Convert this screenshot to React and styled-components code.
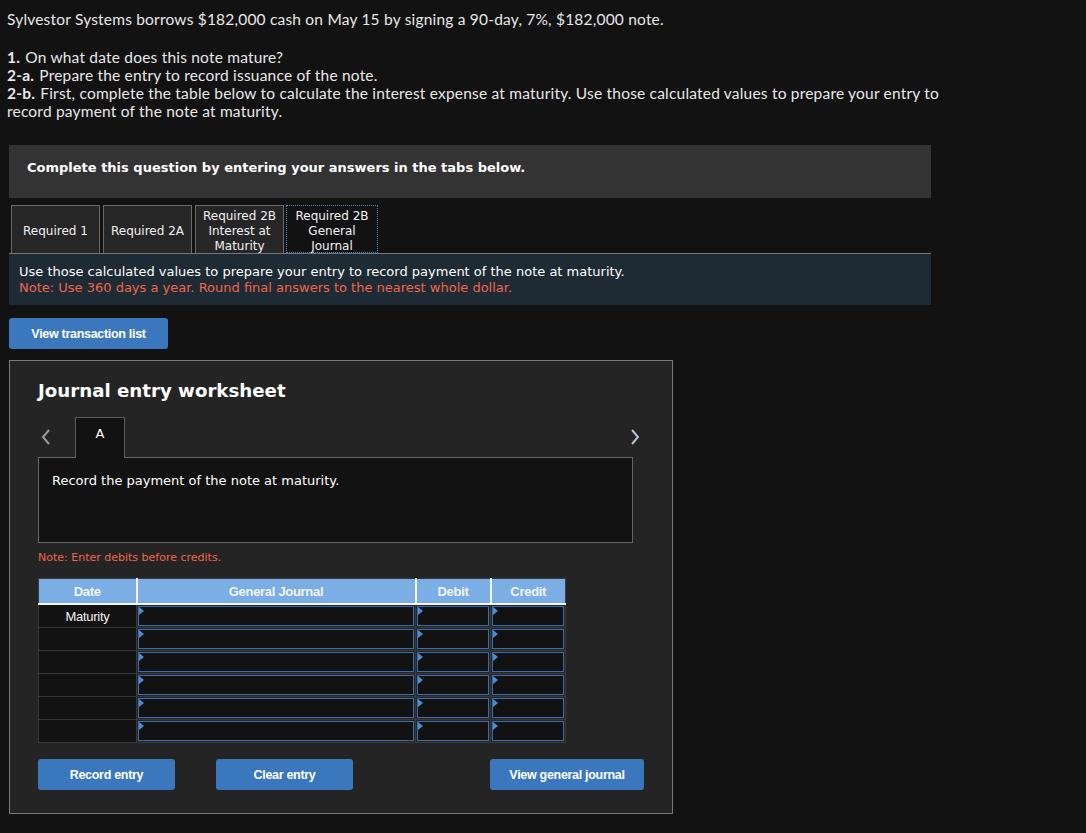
import React from "react";
import styled, { createGlobalStyle } from "styled-components";

const GlobalStyle = createGlobalStyle`
  body {
    margin: 0;
    background: #121212;
    color: #e8e8e8;
    font-family: "Lato", "Open Sans", sans-serif;
  }
`;

const Page = styled.div`
  padding: 10px 0 20px;
`;

const Intro = styled.div`
  width: 935px;
  padding: 0 7px;
  font-size: 15.5px;
  letter-spacing: 0.2px;
  line-height: 18px;
  p {
    margin: 0 0 20px;
  }
  b {
    font-weight: 700;
    margin-right: 1px;
  }
`;

const Block = styled.div`
  margin-left: 9px;
  width: 922px;
`;

const Prompt = styled.div`
  margin-top: 25px;
  height: 53px;
  box-sizing: border-box;
  padding: 15px 18px;
  background: #333333;
  color: #ffffff;
  font: bold 13px "DejaVu Sans", Verdana, sans-serif;
`;

const TabRow = styled.div`
  display: flex;
  gap: 3px;
  margin-top: 7px;
  padding-left: 2px;
`;

const Tab = styled.div`
  height: 48px;
  box-sizing: border-box;
  display: flex;
  align-items: center;
  justify-content: center;
  padding-top: 4px;
  text-align: center;
  font: 12px/15px "DejaVu Sans", Verdana, sans-serif;
  color: #f2f2f2;
  background: ${(p) => (p.$active ? "#121212" : "#262626")};
  border: ${(p) => (p.$active ? "1px dotted #4a86cc" : "1px solid #6a6a6a")};
  border-bottom: ${(p) => (p.$active ? "1px dotted #4a86cc" : "none")};
  width: ${(p) => (p.$active ? "92px" : "89px")};
  margin-left: ${(p) => (p.$active ? "-1px" : "0")};
`;

const Info = styled.div`
  height: 52px;
  box-sizing: border-box;
  border-top: 1px solid #777;
  background: #1e2a34;
  padding: 10px 10px;
  font: 13px/16px "DejaVu Sans", Verdana, sans-serif;
  color: #ffffff;
`;

const Warn = styled.div`
  color: #f0664a;
`;

const Button = styled.button`
  height: 31px;
  width: ${(p) => p.$w || "137px"};
  margin-left: ${(p) => p.$ml || "0"};
  margin-right: ${(p) => p.$mr || "0"};
  border: none;
  border-radius: 3px;
  background: #3a77bd;
  color: #ffffff;
  font: bold 12.5px "Liberation Sans", Arial, sans-serif;
  letter-spacing: -0.3px;
  cursor: pointer;
`;

const TopButton = styled(Button)`
  margin: 13px 0 0 9px;
  display: block;
`;

const Panel = styled.div`
  margin: 11px 0 0 9px;
  width: 664px;
  height: 454px;
  box-sizing: border-box;
  background: #242424;
  border: 1px solid #7a7a7a;
  padding: 18px 39px 0 28px;
`;

const Title = styled.h2`
  margin: 0;
  font: bold 18.2px/24px "DejaVu Sans", Verdana, sans-serif;
  color: #ffffff;
`;

const NavRow = styled.div`
  display: flex;
  align-items: flex-end;
  margin-top: 14px;
  height: 40px;
`;

const Arrow = styled.span`
  display: flex;
  align-items: center;
  height: 32px;
  width: ${(p) => (p.$right ? "auto" : "35px")};
  margin-left: ${(p) => (p.$right ? "auto" : "0")};
  padding-left: ${(p) => (p.$right ? "0" : "2px")};
  margin-right: ${(p) => (p.$right ? "-8px" : "0")};
  align-self: flex-start;
  margin-top: 4px;
`;

const EntryTab = styled.div`
  width: 50px;
  height: 41px;
  box-sizing: border-box;
  background: #121212;
  border: 1px solid #5a5a5a;
  border-bottom: none;
  display: flex;
  justify-content: center;
  padding-top: 8px;
  font: 13px "DejaVu Sans", Verdana, sans-serif;
  color: #fff;
  position: relative;
  top: 1px;
`;

const Description = styled.div`
  width: 595px;
  height: 86px;
  box-sizing: border-box;
  background: #121212;
  border: 1px solid #666;
  padding: 15px 13px;
  font: 13px "DejaVu Sans", Verdana, sans-serif;
  color: #fff;
`;

const Note = styled.div`
  margin-top: 8px;
  font: 11px "DejaVu Sans", Verdana, sans-serif;
  color: #f0664a;
`;

const Table = styled.table`
  margin-top: 14px;
  border-collapse: collapse;
  width: 527px;
  table-layout: fixed;
`;

const Th = styled.th`
  height: 24px;
  padding: 0;
  background: #7aaee5;
  color: #f4f4f4;
  font: bold 13px "Liberation Sans", Arial, sans-serif;
  letter-spacing: -0.3px;
  border-top: 1px solid #3a3a3a;
  border-left: 2px solid #f4f4f4;
  border-bottom: 2px solid #f4f4f4;
  &:first-child {
    border-left: 1px solid #3a3a3a;
  }
  &:last-child {
    border-right: 1px solid #3a3a3a;
  }
`;

const DateCell = styled.td`
  height: 22px;
  padding: 0;
  background: #121212;
  border: 1px solid #3a3a3a;
  text-align: center;
  color: #f4f4f4;
  font: 13px/15px "Liberation Sans", Arial, sans-serif;
  letter-spacing: -0.3px;
`;

const InputCell = styled.td`
  padding: 1px;
  height: 20px;
  border-right: 1px solid #3a3a3a;
  border-bottom: 1px solid #3a3a3a;
  background: #242424;
`;

const Field = styled.div`
  position: relative;
  height: 20px;
  box-sizing: border-box;
  background: #121212;
  border: 1px solid #3a6eae;
  &::before {
    content: "";
    position: absolute;
    left: 0;
    top: 0;
    border-top: 4px solid transparent;
    border-bottom: 4px solid transparent;
    border-left: 5px solid #4f8ad4;
  }
`;

const Actions = styled.div`
  display: flex;
  margin-top: 16px;
`;

const Chevron = ({ dir, color }) => (
  <svg width="12" height="18" viewBox="0 0 12 18">
    <path
      d={dir === "left" ? "M9 2 L3 9 L9 16" : "M3 2 L9 9 L3 16"}
      fill="none"
      stroke={color}
      strokeWidth="2"
    />
  </svg>
);

const rows = ["Maturity", "", "", "", "", ""];

export default function App() {
  return (
    <Page>
      <GlobalStyle />
      <Intro>
        <p>Sylvestor Systems borrows $182,000 cash on May 15 by signing a 90-day, 7%, $182,000 note.</p>
        <p>
          <b>1.</b> On what date does this note mature?
          <br />
          <b>2-a.</b> Prepare the entry to record issuance of the note.
          <br />
          <b>2-b.</b> First, complete the table below to calculate the interest expense at maturity. Use those
          calculated values to prepare your entry to record payment of the note at maturity.
        </p>
      </Intro>
      <Block>
        <Prompt>Complete this question by entering your answers in the tabs below.</Prompt>
        <TabRow>
          <Tab>Required 1</Tab>
          <Tab>Required 2A</Tab>
          <Tab>
            Required 2B
            <br />
            Interest at
            <br />
            Maturity
          </Tab>
          <Tab $active>
            Required 2B
            <br />
            General
            <br />
            Journal
          </Tab>
        </TabRow>
        <Info>
          <div>Use those calculated values to prepare your entry to record payment of the note at maturity.</div>
          <Warn>Note: Use 360 days a year. Round final answers to the nearest whole dollar.</Warn>
        </Info>
      </Block>
      <TopButton $w="159px">View transaction list</TopButton>
      <Panel>
        <Title>Journal entry worksheet</Title>
        <NavRow>
          <Arrow>
            <Chevron dir="left" color="#9a9a9a" />
          </Arrow>
          <EntryTab>A</EntryTab>
          <Arrow $right>
            <Chevron dir="right" color="#b4c4d8" />
          </Arrow>
        </NavRow>
        <Description>Record the payment of the note at maturity.</Description>
        <Note>Note: Enter debits before credits.</Note>
        <Table>
          <colgroup>
            <col style={{ width: "98px" }} />
            <col style={{ width: "279px" }} />
            <col style={{ width: "75px" }} />
            <col style={{ width: "75px" }} />
          </colgroup>
          <thead>
            <tr>
              <Th>Date</Th>
              <Th>General Journal</Th>
              <Th>Debit</Th>
              <Th>Credit</Th>
            </tr>
          </thead>
          <tbody>
            {rows.map((d, i) => (
              <tr key={i}>
                <DateCell>{d}</DateCell>
                <InputCell>
                  <Field />
                </InputCell>
                <InputCell>
                  <Field />
                </InputCell>
                <InputCell>
                  <Field />
                </InputCell>
              </tr>
            ))}
          </tbody>
        </Table>
        <Actions>
          <Button>Record entry</Button>
          <Button $ml="41px">Clear entry</Button>
          <Button $w="154px" $ml="auto" $mr="-11px">
            View general journal
          </Button>
        </Actions>
      </Panel>
    </Page>
  );
}
